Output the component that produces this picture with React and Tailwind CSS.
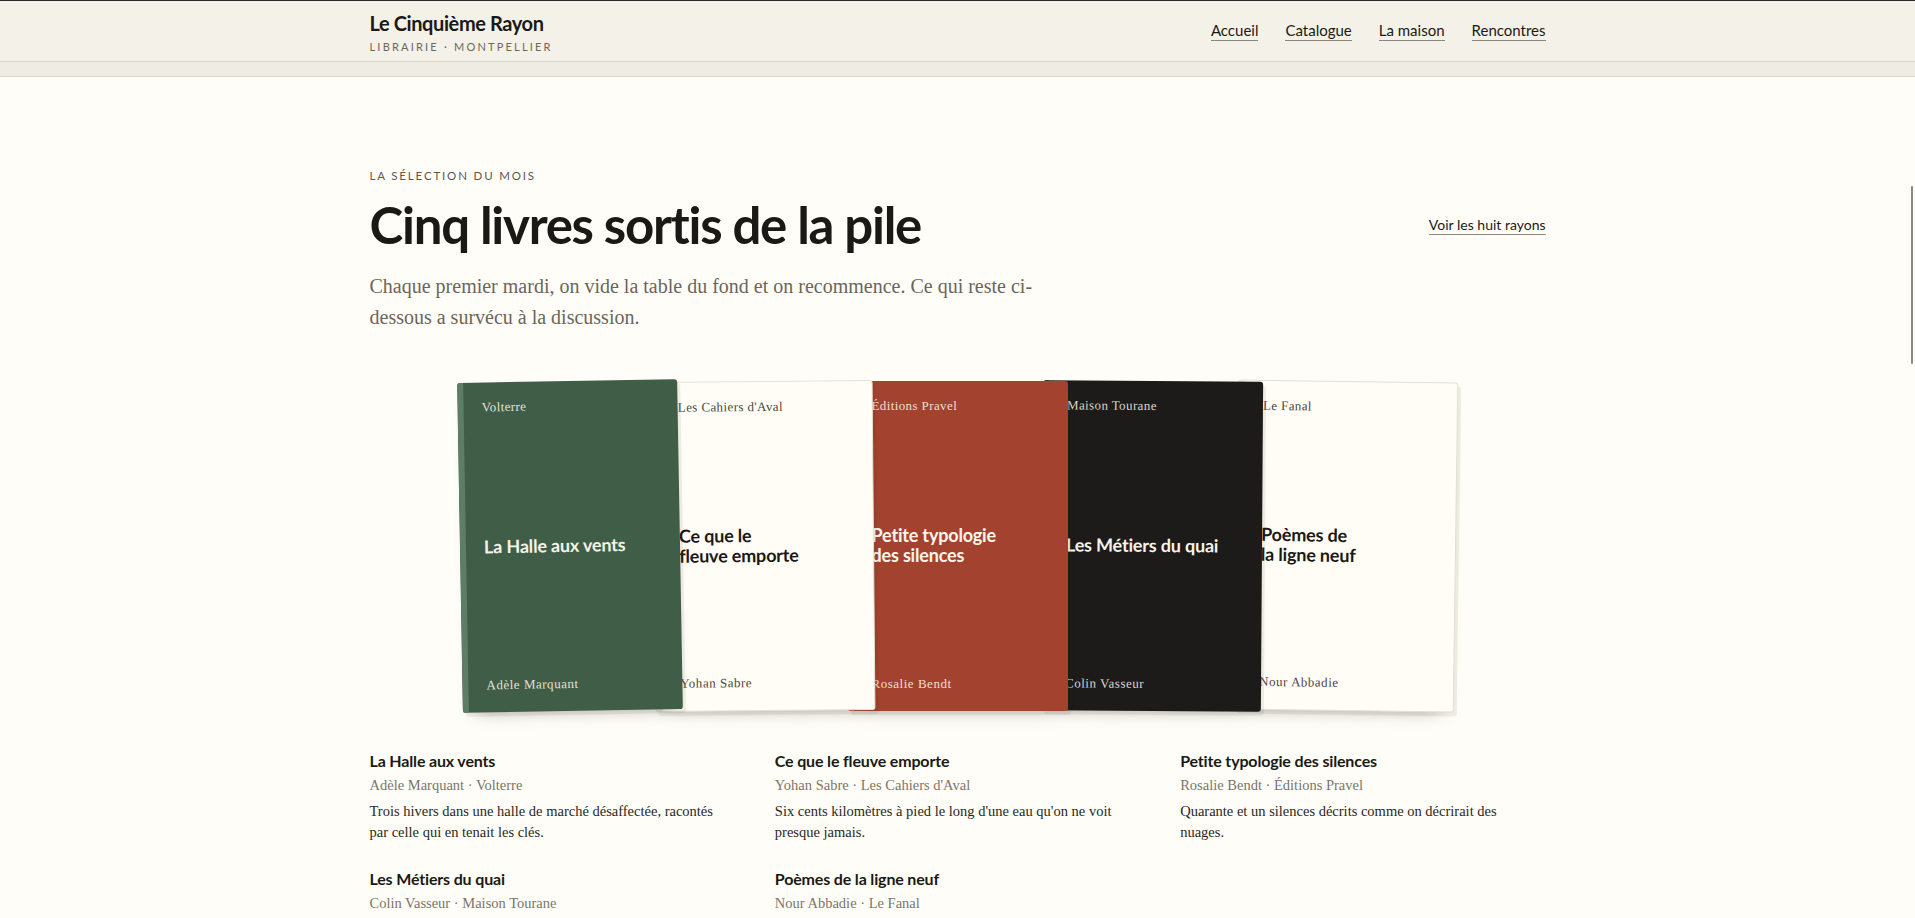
import React from "react";

const books = [
  {
    pub: "Volterre",
    title: ["La Halle aux vents"],
    author: "Adèle Marquant",
    bg: "bg-[#3f5d47]",
    spine: "bg-[#5e7d67]",
    text: "text-[#f6f2e8]",
    sub: "text-[#e4e1d6]",
    rot: "-rotate-1",
    z: "z-50",
    border: "",
  },
  {
    pub: "Les Cahiers d'Aval",
    title: ["Ce que le", "fleuve emporte"],
    author: "Yohan Sabre",
    bg: "bg-[#fffdf6]",
    spine: "bg-[#ece8dd]",
    text: "text-[#1b1916]",
    sub: "text-[#4a463f]",
    rot: "-rotate-[0.5deg]",
    z: "z-40",
    border: "border border-[#e6e2d7]",
  },
  {
    pub: "Éditions Pravel",
    title: ["Petite typologie", "des silences"],
    author: "Rosalie Bendt",
    bg: "bg-[#a3432f]",
    spine: "bg-[#b8604d]",
    text: "text-[#fbf5ec]",
    sub: "text-[#f1ddd3]",
    rot: "rotate-0",
    z: "z-30",
    border: "",
  },
  {
    pub: "Maison Tourane",
    title: ["Les Métiers du quai"],
    author: "Colin Vasseur",
    bg: "bg-[#1c1b19]",
    spine: "bg-[#33312d]",
    text: "text-[#f7f3ea]",
    sub: "text-[#d9d5cc]",
    rot: "rotate-[0.4deg]",
    z: "z-20",
    border: "",
  },
  {
    pub: "Le Fanal",
    title: ["Poèmes de", "la ligne neuf"],
    author: "Nour Abbadie",
    bg: "bg-[#fffdf6]",
    spine: "bg-[#ece8dd]",
    text: "text-[#1b1916]",
    sub: "text-[#4a463f]",
    rot: "rotate-[0.8deg]",
    z: "z-10",
    border: "border border-[#e3dfd4]",
  },
];

const list = [
  {
    title: "La Halle aux vents",
    meta: "Adèle Marquant · Volterre",
    desc: "Trois hivers dans une halle de marché désaffectée, racontés par celle qui en tenait les clés.",
  },
  {
    title: "Ce que le fleuve emporte",
    meta: "Yohan Sabre · Les Cahiers d'Aval",
    desc: "Six cents kilomètres à pied le long d'une eau qu'on ne voit presque jamais.",
  },
  {
    title: "Petite typologie des silences",
    meta: "Rosalie Bendt · Éditions Pravel",
    desc: "Quarante et un silences décrits comme on décrirait des nuages.",
  },
  {
    title: "Les Métiers du quai",
    meta: "Colin Vasseur · Maison Tourane",
    desc: "",
  },
  {
    title: "Poèmes de la ligne neuf",
    meta: "Nour Abbadie · Le Fanal",
    desc: "",
  },
];

const sans = "font-['Lato','Inter',sans-serif]";
const serif = "font-['Liberation_Serif','Times_New_Roman',serif]";

function Cover({ b, first }) {
  return (
    <div
      className={`relative ${b.z} ${b.rot} ${first ? "" : "-ml-[26px]"} w-[220px] h-[330px] shrink-0 rounded-[3px] ${b.bg} ${b.border} shadow-[3px_4px_0_rgba(60,50,30,0.08),0_12px_18px_-14px_rgba(0,0,0,0.35)] flex flex-col pl-6 pr-4 pt-[17px] pb-[19px] overflow-hidden`}
    >
      <div className={`absolute left-0 top-0 bottom-0 w-[6px] ${b.spine}`} />
      <div className={`${serif} text-[13px] leading-[16px] tracking-[0.03em] ${b.sub}`}>{b.pub}</div>
      <div className="flex-1 flex items-center">
        <div className={`${sans} font-bold text-[18px] leading-[20px] tracking-[-0.01em] ${b.text}`}>
          {b.title.map((l) => (
            <div key={l}>{l}</div>
          ))}
        </div>
      </div>
      <div className={`${serif} text-[13px] leading-[16px] tracking-[0.04em] ${b.sub}`}>{b.author}</div>
    </div>
  );
}

export default function App() {
  return (
    <div className="min-h-screen bg-[#fffdf7] text-[#1b1916] border-t border-[#2b2a28]">
      <header className="bg-[#f4f1e8] border-b border-[#d9d5c9]">
        <div className="mx-auto w-[1176px] h-[60px] flex items-center justify-between">
          <div className="flex flex-col mt-[3px]">
            <div className={`${sans} font-bold text-[20px] leading-[23px] tracking-[-0.02em] text-[#1b1916]`}>
              Le Cinquième Rayon
            </div>
            <div className={`${sans} text-[11px] leading-[14px] tracking-[0.2em] text-[#6d675d] mt-[5px]`}>
              LIBRAIRIE · MONTPELLIER
            </div>
          </div>
          <nav className={`${sans} flex items-center gap-[27px] text-[15px] text-[#1b1916]`}>
            {["Accueil", "Catalogue", "La maison", "Rencontres"].map((n) => (
              <a key={n} className="border-b border-[#8d877b] leading-[18px] pb-[1px]">
                {n}
              </a>
            ))}
          </nav>
        </div>
      </header>
      <div className="h-[15px] bg-[#efece3] border-b border-[#dcd8cc]" />

      <main className="mx-auto w-[1176px] pt-[91px] pb-10">
        <div className={`${sans} text-[11.5px] leading-[16px] tracking-[0.16em] text-[#5d584f]`}>
          LA SÉLECTION DU MOIS
        </div>
        <div className="flex items-center justify-between mt-[14px]">
          <h1 className={`${sans} font-bold text-[51px] leading-[54px] tracking-[-0.025em] text-[#1b1916]`}>
            Cinq livres sortis de la pile
          </h1>
          <a className={`${sans} text-[14px] leading-[17px] border-b border-[#8d877b] pb-[1px] text-[#1b1916]`}>
            Voir les huit rayons
          </a>
        </div>
        <p className={`${serif} text-[20px] leading-[31px] text-[#6b655b] max-w-[690px] mt-[19px]`}>
          Chaque premier mardi, on vide la table du fond et on recommence. Ce qui reste ci-dessous a survécu à la
          discussion.
        </p>

        <div className="mt-[48px] flex justify-center">
          {books.map((b, i) => (
            <Cover key={b.pub} b={b} first={i === 0} />
          ))}
        </div>

        <div className="mt-[39px] grid grid-cols-3 gap-x-10 gap-y-[25px]">
          {list.map((it) => (
            <div key={it.title} className="w-[356px]">
              <div className={`${sans} font-bold text-[16px] leading-[22px] tracking-[-0.01em] text-[#1b1916]`}>
                {it.title}
              </div>
              <div className={`${serif} text-[14.5px] leading-[20px] text-[#7b756b] mt-[3px]`}>{it.meta}</div>
              {it.desc && (
                <div className={`${serif} text-[14.5px] leading-[21px] text-[#2a2722] mt-[6px]`}>{it.desc}</div>
              )}
            </div>
          ))}
        </div>
      </main>
      <div className="fixed right-[2px] top-[186px] w-[2px] h-[178px] bg-[#8a8a8a] rounded-full" />
    </div>
  );
}
